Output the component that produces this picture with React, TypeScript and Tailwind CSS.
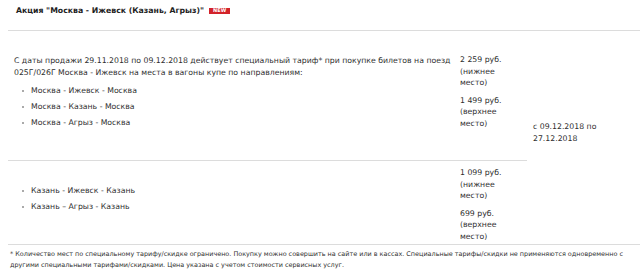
import React from "react";

const font = { fontFamily: '"DejaVu Sans", Verdana, sans-serif' };

const Bullets = ({ items }: { items: string[] }) => (
  <ul>
    {items.map((item) => (
      <li key={item} className="flex h-4 items-center">
        <span className="ml-[8px] mr-[7px] h-[2px] w-[2px] bg-[#aaa]" />
        <span>{item}</span>
      </li>
    ))}
  </ul>
);

const Price = ({ value, place }: { value: string; place: string }) => (
  <div>
    <div>{value}</div>
    <div>({place}</div>
    <div>место)</div>
  </div>
);

export default function App() {
  return (
    <div className="h-[279px] w-[640px] overflow-hidden bg-white text-[7.75px] leading-[11.5px] text-[#2f2f2f]" style={font}>
      <div className="flex h-[30px] items-start pl-4 pt-[5px]">
        <span className="text-[7.75px] font-bold leading-[12px] text-[#1e1e1e]">Акция "Москва - Ижевск (Казань, Агрыз)"</span>
        <span className="ml-[5px] mt-[2.5px] flex h-[6px] w-[21px] items-center justify-center bg-[#d2232a] text-[5px] font-bold leading-none text-white">NEW</span>
      </div>

      <div className="ml-2 grid grid-cols-[444px_75px_1fr] grid-rows-[129px_84px] border-y border-[#dcdcdc]">
        <div className="pl-[6px] pt-[24px]">
          <p>
            С даты продажи 29.11.2018 по 09.12.2018 действует специальный тариф* при покупке билетов на поезд
            <br />
            025Г/026Г Москва - Ижевск на места в вагоны купе по направлениям:
          </p>
          <div className="mt-[5px]">
            <Bullets items={["Москва - Ижевск - Москва", "Москва - Казань - Москва", "Москва - Агрыз - Москва"]} />
          </div>
        </div>
        <div className="flex flex-col gap-[6px] pl-2 pt-[23px]">
          <Price value="2 259 руб." place="нижнее" />
          <Price value="1 499 руб." place="верхнее" />
        </div>
        <div className="row-span-2 pl-[6px] pt-[90px]">
          с 09.12.2018 по
          <br />
          27.12.2018
        </div>

        <div className="border-t border-[#dcdcdc] pl-[6px] pt-[22px]">
          <Bullets items={["Казань - Ижевск - Казань", "Казань – Агрыз - Казань"]} />
        </div>
        <div className="flex flex-col gap-[6px] border-t border-[#dcdcdc] pl-2 pt-[6px]">
          <Price value="1 099 руб." place="нижнее" />
          <Price value="699 руб." place="верхнее" />
        </div>
      </div>

      <p className="pl-[10px] pt-[4px] text-[6.45px] leading-[11px] text-[#2f2f2f]">
        * Количество мест по специальному тарифу/скидке ограничено. Покупку можно совершить на сайте или в кассах. Специальные тарифы/скидки не применяются одновременно с
        <br />
        другими специальными тарифами/скидками. Цена указана с учетом стоимости сервисных услуг.
      </p>
    </div>
  );
}
